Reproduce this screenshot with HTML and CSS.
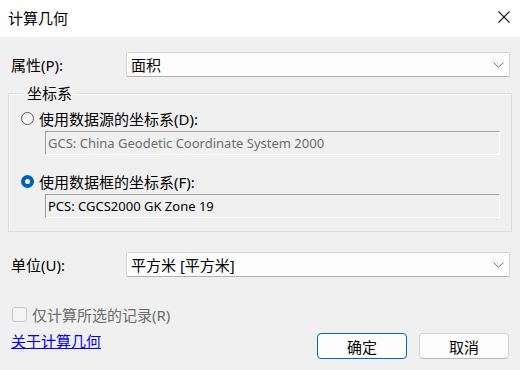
FILE: index.html
```html
<!DOCTYPE html>
<html lang="zh-CN">
<head>
    <meta charset="UTF-8">
    <title>计算几何</title>
    <link rel="stylesheet" href="styles.css">
</head>
<body>
    <div class="dialog">
        <div class="titlebar">
            <span class="title">计算几何</span>
            <svg class="close" width="12" height="12" viewBox="0 0 12 12">
                <path d="M0.5 0.5 L11.5 11.5 M11.5 0.5 L0.5 11.5" stroke="#1a1a1a" stroke-width="1.1" fill="none"/>
            </svg>
        </div>
        <div class="body">
            <div class="row row-prop">
                <span class="label">属性(<u>P</u>):</span>
                <div class="combo">
                    <span>面积</span>
                    <svg class="chevron" width="11" height="6" viewBox="0 0 11 6"><path d="M0.5 0.5 L5.5 5.2 L10.5 0.5" stroke="#707070" fill="none"/></svg>
                </div>
            </div>
            <fieldset class="group">
                <legend>坐标系</legend>
                <div class="option">
                    <span class="radio"></span>
                    <span>使用数据源的坐标系(<u>D</u>):</span>
                </div>
                <div class="field disabled">GCS: China Geodetic Coordinate System 2000</div>
                <div class="option option-second">
                    <span class="radio checked"></span>
                    <span>使用数据框的坐标系(<u>F</u>):</span>
                </div>
                <div class="field">PCS: CGCS2000 GK Zone 19</div>
            </fieldset>
            <div class="row row-unit">
                <span class="label">单位(<u>U</u>):</span>
                <div class="combo">
                    <span>平方米 [平方米]</span>
                    <svg class="chevron" width="11" height="6" viewBox="0 0 11 6"><path d="M0.5 0.5 L5.5 5.2 L10.5 0.5" stroke="#707070" fill="none"/></svg>
                </div>
            </div>
            <div class="check">
                <span class="box"></span>
                <span>仅计算所选的记录(<u>R</u>)</span>
            </div>
            <div class="footer">
                <a class="link" href="#">关于计算几何</a>
                <div class="buttons">
                    <button class="btn btn-default">确定</button>
                    <button class="btn">取消</button>
                </div>
            </div>
        </div>
    </div>
</body>
</html>
```

FILE: styles.css
```css
body {
    margin: 0;
    font-family: "Noto Sans", "Noto Sans CJK SC", sans-serif;
    font-size: 14px;
    color: #000;
    background: #f0f0f0;
}
u {
    text-decoration: none;
}
.dialog {
    width: 520px;
    height: 370px;
    background: #f0f0f0;
}
.titlebar {
    height: 37px;
    background: #fff;
    display: flex;
    align-items: center;
    justify-content: space-between;
    padding: 0 10px 0 8px;
    box-sizing: border-box;
}
.title {
    font-size: 15px;
    margin-top: -2px;
}
.close {
    margin-top: -3px;
}
.body {
    padding: 15px 8px 0 8px;
}
.row {
    display: flex;
    align-items: center;
    height: 25px;
}
.label {
    width: 118px;
    box-sizing: border-box;
    padding-left: 3px;
    font-size: 15px;
}
.combo {
    flex: 1;
    height: 25px;
    margin-right: 2px;
    box-sizing: border-box;
    background: #fdfdfd;
    border: 1px solid #d6d6d6;
    border-bottom-color: #b0b0b0;
    border-radius: 2px;
    display: flex;
    align-items: center;
    justify-content: space-between;
    padding: 0 5px 0 4px;
    font-size: 15px;
}
.chevron {
    margin-top: 1px;
}
.group {
    margin: 7px 0 0 0;
    padding: 6px 11px 9px 8px;
    border: 1px solid #dcdcdc;
    box-shadow: inset 1px 1px 0 #fff;
    height: 148px;
    box-sizing: border-box;
}
.group legend {
    padding: 0 4px;
    margin-left: 6px;
    font-size: 15px;
    line-height: 18px;
}
.option {
    display: flex;
    align-items: center;
    height: 20px;
    font-size: 15px;
}
.option-second {
    margin-top: 16px;
}
.radio {
    width: 13px;
    height: 13px;
    box-sizing: border-box;
    border: 1px solid #5a5a5a;
    border-radius: 50%;
    margin: 0 5px 0 4px;
    background: #f6f6f6;
}
.radio.checked {
    border: 4px solid #005fb8;
    background: #fff;
}
.field {
    margin: 3px 0 0 28px;
    height: 24px;
    box-sizing: border-box;
    border-top: 1px solid #a0a0a0;
    border-left: 1px solid #a0a0a0;
    border-right: 1px solid #fff;
    border-bottom: 1px solid #fff;
    background: #f0f0f0;
    padding: 1px 0 0 2px;
    line-height: 20px;
    font-size: 13px;
}
.field.disabled {
    color: #6d6d6d;
}
.row-unit {
    margin-top: 20px;
}
.check {
    display: flex;
    align-items: center;
    margin-top: 27px;
    color: #6d6d6d;
    font-size: 15px;
}
.box {
    width: 15px;
    height: 15px;
    box-sizing: border-box;
    border: 1px solid #c8c8c8;
    border-radius: 3px;
    background: #f5f5f5;
    margin: 0 5px 0 4px;
}
.footer {
    display: flex;
    justify-content: space-between;
    align-items: flex-start;
    margin-top: 3px;
}
.link {
    color: #0000ff;
    font-size: 15px;
    margin-left: 3px;
    margin-top: 2px;
}
.buttons {
    display: flex;
    gap: 12px;
    margin-top: 5px;
    margin-right: 3px;
}
.btn {
    width: 90px;
    height: 26px;
    font-family: inherit;
    font-size: 15px;
    background: #fdfdfd;
    border: 1px solid #d0d0d0;
    border-bottom-color: #b8b8b8;
    border-radius: 4px;
    padding: 0;
    color: #000;
}
.btn-default {
    border: 1.5px solid #0067c0;
}
```
